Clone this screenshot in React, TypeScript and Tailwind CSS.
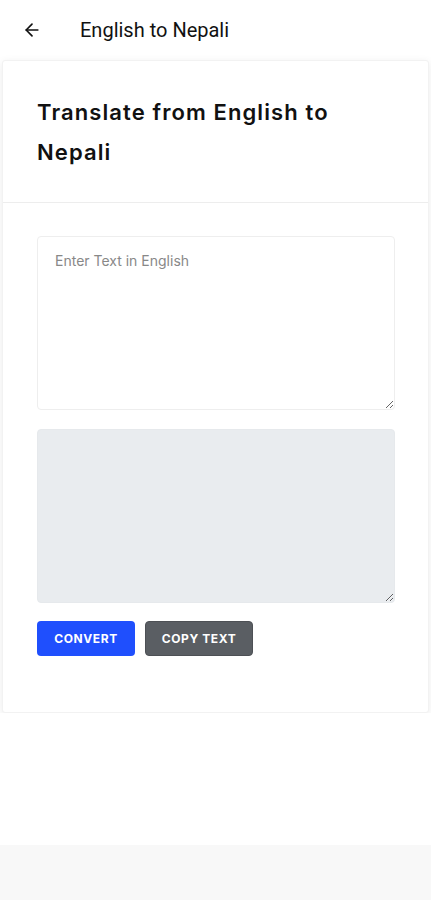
import { ArrowLeft } from "lucide-react";

const App = () => {
  return (
    <div className="min-h-[900px] flex flex-col bg-white font-['Inter',sans-serif]">
      <header className="h-[60px] flex items-center shrink-0">
        <button className="w-[64px] flex justify-center text-[#111]">
          <ArrowLeft className="w-[20px] h-[20px]" strokeWidth={2} />
        </button>
        <h2 className="ml-[16px] text-[20px] text-[#111] font-['Roboto',sans-serif]">English to Nepali</h2>
      </header>

      <div className="mx-[2px] bg-white rounded-[3px] shadow-[0_2px_8px_rgba(0,0,0,0.08)] border border-[#f2f2f2]">
        <div className="pl-[34px] pr-[33px] pt-[31px] pb-[30px] border-b border-[#ededed]">
          <h1 className="max-w-[330px] text-[22px] leading-[40px] font-semibold tracking-[1.1px] text-[#111]">
            Translate from English to Nepali
          </h1>
        </div>
        <div className="pl-[34px] pr-[33px] pt-[33px] pb-[56px] flex flex-col">
          <textarea
            className="h-[174px] w-full rounded-[4px] border border-[#eeeeee] bg-white px-[17px] py-[13px] text-[14px] text-[#333] placeholder:text-[#888] resize-y outline-none"
            placeholder="Enter Text in English"
          />
          <textarea
            readOnly
            className="mt-[19px] h-[174px] w-full rounded-[4px] border border-[#e6e9ec] bg-[#e9ecef] px-[17px] py-[13px] text-[14px] resize-y outline-none"
          />
          <div className="mt-[18px] flex gap-[10px]">
            <button className="h-[35px] w-[98px] rounded-[4px] bg-[#1f4ffd] text-white text-[12px] font-bold tracking-[0.6px]">
              CONVERT
            </button>
            <button className="h-[35px] w-[108px] rounded-[4px] bg-[#5a5e63] border border-[#4d5055] text-white text-[12px] font-bold tracking-[0.6px]">
              COPY TEXT
            </button>
          </div>
        </div>
      </div>

      <div className="h-[132px] bg-white" />
      <div className="flex-1 bg-[#f8f8f8]" />
    </div>
  );
};

export default App;
